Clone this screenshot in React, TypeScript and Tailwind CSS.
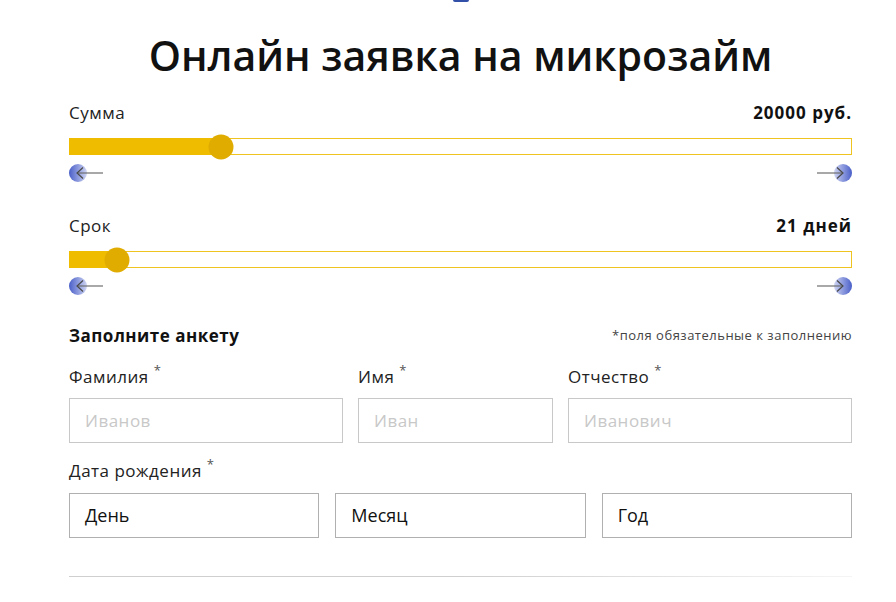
import React from "react";

const font = { fontFamily: '"Open Sans", "Noto Sans", sans-serif' };

function ArrowLeft() {
  return (
    <svg width="35" height="18" viewBox="0 0 35 18">
      <defs>
        <linearGradient id="gl" x1="0" x2="1" y1="0" y2="0">
          <stop offset="0" stopColor="#4a5fc8" />
          <stop offset="1" stopColor="#cfd5f3" />
        </linearGradient>
      </defs>
      <circle cx="9" cy="9" r="9" fill="url(#gl)" />
      <line x1="8" y1="9" x2="34" y2="9" stroke="#6f6f6f" strokeWidth="1.2" />
      <path d="M14 3.5 L8 9 L14 14.5" fill="none" stroke="#4a4a4a" strokeWidth="1.2" />
    </svg>
  );
}

function ArrowRight() {
  return (
    <svg width="35" height="18" viewBox="0 0 35 18">
      <defs>
        <linearGradient id="gr" x1="0" x2="1" y1="0" y2="0">
          <stop offset="0" stopColor="#cfd5f3" />
          <stop offset="1" stopColor="#4a5fc8" />
        </linearGradient>
      </defs>
      <circle cx="26" cy="9" r="9" fill="url(#gr)" />
      <line x1="0" y1="9" x2="26" y2="9" stroke="#6f6f6f" strokeWidth="1.2" />
      <path d="M20 3.5 L26 9 L20 14.5" fill="none" stroke="#4a4a4a" strokeWidth="1.2" />
    </svg>
  );
}

function Slider({ label, value, pos, mt }: { label: string; value: string; pos: number; mt: string }) {
  return (
    <div className={mt}>
      <div className="flex justify-between items-center h-[24px]">
        <span className="text-[17px] tracking-[0.5px] text-[#222]">{label}</span>
        <span className="text-[17px] tracking-[1px] font-bold text-[#111]">{value}</span>
      </div>
      <div className="relative mt-[13px] h-[17px] border border-[#f0c420]">
        <div className="absolute left-[-1px] top-[-1px] bottom-[-1px] bg-[#f0bc00]" style={{ width: pos }} />
        <div
          className="absolute top-1/2 w-[25px] h-[25px] rounded-full bg-[#e0ac00] -translate-y-1/2 -translate-x-1/2"
          style={{ left: pos }}
        />
      </div>
      <div className="mt-[9px] flex justify-between h-[18px]">
        <ArrowLeft />
        <ArrowRight />
      </div>
    </div>
  );
}

function Label({ text }: { text: string }) {
  return (
    <div className="h-[24px] flex items-center text-[17px] tracking-[0.5px] text-[#222]">
      <span>{text}</span>
      <span className="ml-[5px] -mt-[12px] text-[13px] text-[#555]">*</span>
    </div>
  );
}

function Input({ placeholder }: { placeholder: string }) {
  return (
    <div className="w-full mt-[9px] h-[45px] border border-[#c8c8c8] flex items-center px-[15px] text-[17px] tracking-[0.5px] text-[#c8c8c8]">
      {placeholder}
    </div>
  );
}

function Select({ text }: { text: string }) {
  return (
    <div className="flex-1 h-[45px] border border-[#b0b0b0] flex items-center px-[15px] text-[18px] text-[#111]">
      {text}
    </div>
  );
}

export default function App() {
  return (
    <div className="relative w-[896px] h-[602px] bg-white overflow-hidden" style={font}>
      <div className="absolute left-[453px] top-0 w-[16px] h-[2px] rounded-b-full bg-[#3350a8]" />
      <div className="pl-[69px] pr-[44px]">
        <h1 className="pt-[32px] text-center text-[41px] leading-[46px] font-semibold text-[#111]">
          Онлайн заявка на микрозайм
        </h1>
        <Slider label="Сумма" value="20000 руб." pos={151} mt="mt-[23px]" />
        <Slider label="Срок" value="21 дней" pos={47} mt="mt-[32px]" />
        <div className="mt-[29px] h-[24px] flex justify-between items-center">
          <span className="text-[17px] tracking-[0.5px] font-bold text-[#111]">Заполните анкету</span>
          <span className="text-[13px] tracking-[0.5px] text-[#444]">*поля обязательные к заполнению</span>
        </div>
        <div className="mt-[17px] flex gap-[15px]">
          <div className="w-[274px]">
            <Label text="Фамилия" />
            <Input placeholder="Иванов" />
          </div>
          <div className="w-[195px]">
            <Label text="Имя" />
            <Input placeholder="Иван" />
          </div>
          <div className="flex-1">
            <Label text="Отчество" />
            <Input placeholder="Иванович" />
          </div>
        </div>
        <div className="mt-[16px]">
          <Label text="Дата рождения" />
        </div>
        <div className="mt-[10px] flex gap-[16px]">
          <Select text="День" />
          <Select text="Месяц" />
          <Select text="Год" />
        </div>
        <div className="mt-[38px] h-[1px] bg-gradient-to-r from-[#cfcfcf] via-[#cfcfcf] to-[#f5f5f5]" />
      </div>
    </div>
  );
}
